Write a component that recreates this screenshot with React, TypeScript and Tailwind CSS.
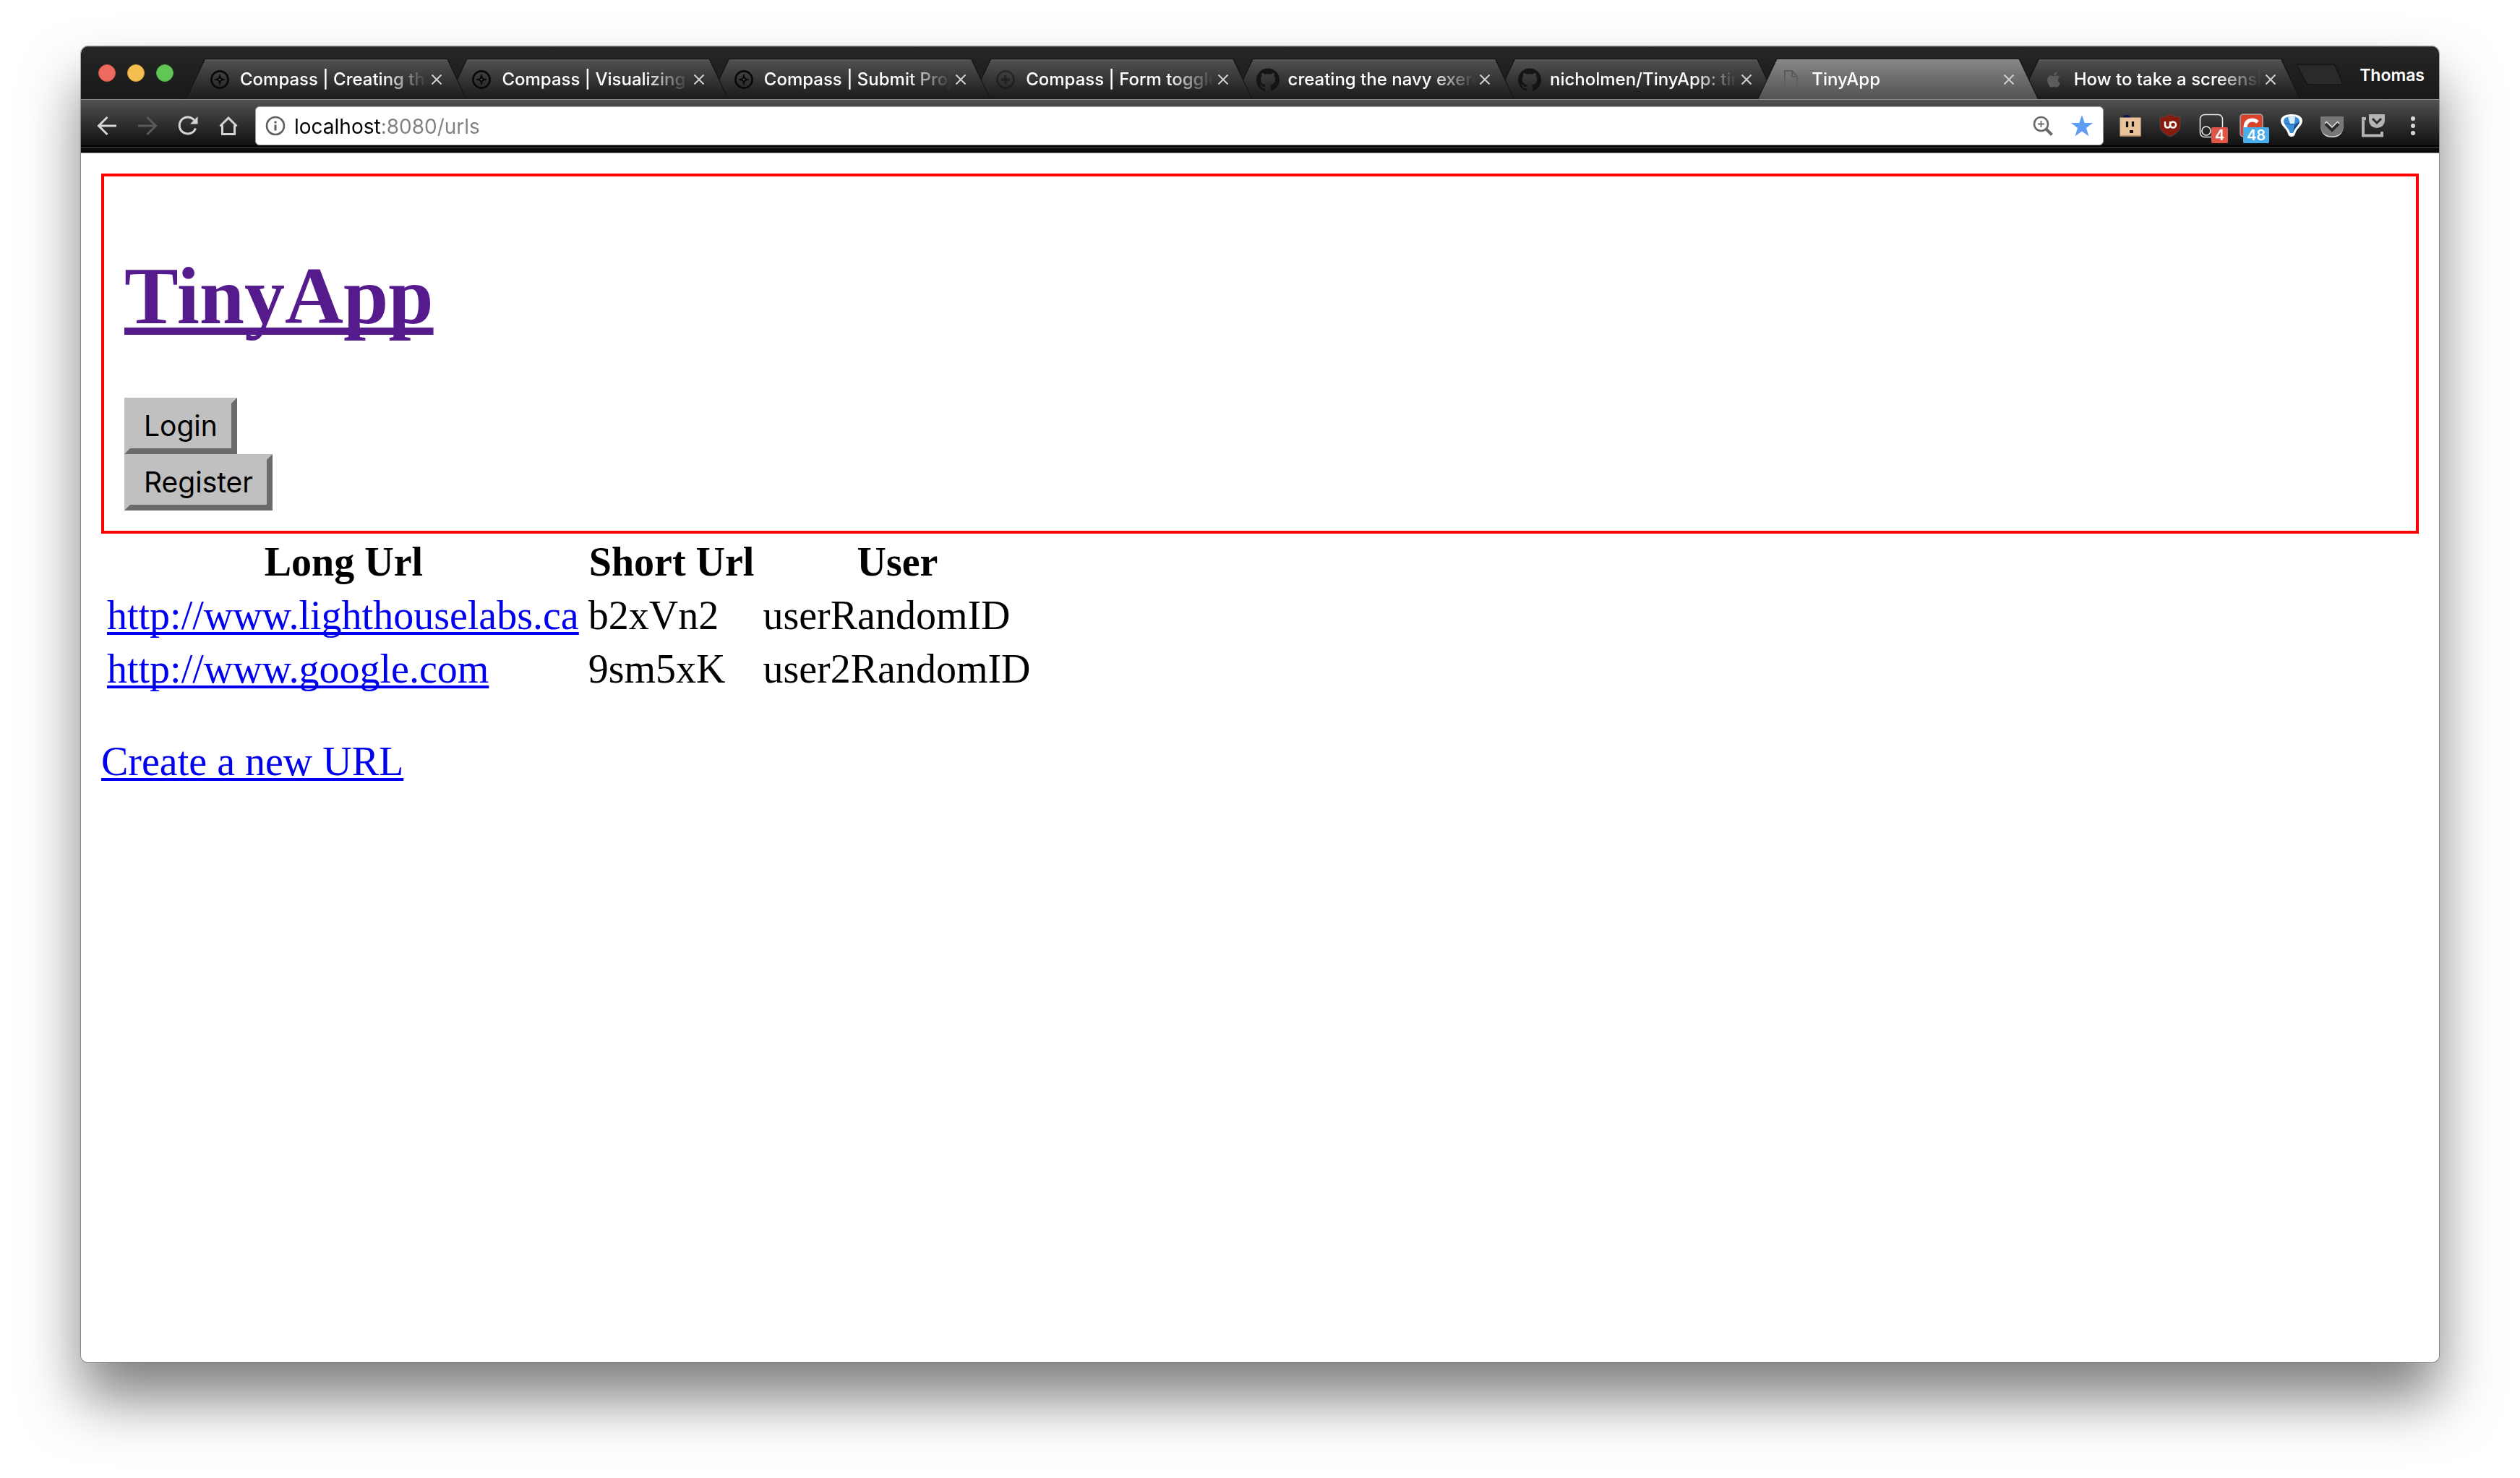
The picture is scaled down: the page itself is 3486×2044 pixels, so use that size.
import React from "react";
import { SiGithub } from "react-icons/si";
import { FaApple } from "react-icons/fa";

const CompassIcon = ({ faint = false }: { faint?: boolean }) => (
  <svg viewBox="0 0 26 26" className={faint ? "size-[26px] opacity-40" : "size-[26px]"} fill="none" stroke="#080808">
    <circle cx="13" cy="13" r="11.6" strokeWidth="2.6" />
    {faint ? (
      <path d="M13 7v12M7 13h12" strokeWidth="3.5" />
    ) : (
      <path d="M13 5.500l1.800 5.700 5.700 1.800-5.700 1.800L13 20.500l-1.800-5.700L5.500 13l5.700-1.800z" fill="#080808" strokeWidth="0.6" />
    )}
    {!faint && <circle cx="13" cy="13" r="1.300" fill="#555" stroke="none" />}
  </svg>
);

const PageIcon = () => (
  <svg viewBox="0 0 22 28" className="h-7 w-[22px]" fill="none" strokeWidth="2">
    <defs>
      <linearGradient id="page-fade" gradientUnits="userSpaceOnUse" x1="0" y1="0" x2="0" y2="28">
        <stop offset="0.300" stopColor="#5a5a5a" />
        <stop offset="1" stopColor="#5a5a5a" stopOpacity="0" />
      </linearGradient>
    </defs>
    <path d="M2 28V2h10l7 8v18M12 2v8h7" stroke="url(#page-fade)" />
  </svg>
);

type Tab = { title: string; icon: React.ReactNode; z: string; active?: boolean };

const tabs: Tab[] = [
  { title: "Compass | Creating the", icon: <CompassIcon />, z: "z-[8]" },
  { title: "Compass | Visualizing", icon: <CompassIcon />, z: "z-[7]" },
  { title: "Compass | Submit Project", icon: <CompassIcon />, z: "z-[6]" },
  { title: "Compass | Form toggle", icon: <CompassIcon faint />, z: "z-[5]" },
  { title: "creating the navy exercise", icon: <SiGithub className="size-8 text-[#141414]" />, z: "z-[4]" },
  { title: "nicholmen/TinyApp: tiny", icon: <SiGithub className="size-8 text-[#141414]" />, z: "z-[3]" },
  { title: "TinyApp", icon: <PageIcon />, z: "z-20", active: true },
  { title: "How to take a screenshot", icon: <FaApple className="size-6 text-[#5c5c5c]" />, z: "z-[1]" },
];

const Cross = () => (
  <svg viewBox="0 0 16 16" className="size-4" stroke="#d0d0d0" strokeWidth="2">
    <path d="M1.500 1.500l13 13M14.500 1.500l-13 13" />
  </svg>
);

function BrowserTab({ tab }: { tab: Tab }) {
  return (
    <div
      className={`relative -ml-[26px] h-full min-w-0 flex-1 bg-[#131313] pt-px [clip-path:polygon(26px_0,calc(100%-26px)_0,100%_100%,0_100%)] ${tab.z}`}
    >
      <div
        className={`flex h-full items-center pr-[33px] pl-[31px] [clip-path:polygon(27px_0,calc(100%-27px)_0,calc(100%-1px)_100%,1px_100%)] ${
          tab.active ? "bg-linear-to-b from-[#888888] to-[#525252]" : "bg-linear-to-b from-[#525252] to-[#1b1b1b]"
        }`}
      >
        <span className="flex w-8 shrink-0 items-center justify-center">{tab.icon}</span>
        <a
          href="#tab"
          className="ml-3 min-w-0 flex-1 overflow-hidden text-[24px] leading-[32px] font-medium whitespace-nowrap text-white mask-r-from-[76%] mask-r-to-100%"
        >
          {tab.title}
        </a>
        <button aria-label="Close tab" className="ml-[5px] shrink-0">
          <Cross />
        </button>
      </div>
    </div>
  );
}

function TabStrip() {
  return (
    <div className="flex h-[73px] bg-linear-to-b from-[#262626] to-[#191919] shadow-[inset_0_1px_0_#555]">
      <div className="flex w-[145px] shrink-0 items-center gap-4 pl-6">
        <button aria-label="Close window" className="size-6 rounded-full border border-[#d5544c] bg-[#ee6a5f]" />
        <button aria-label="Minimize window" className="size-6 rounded-full border border-[#dca23c] bg-[#f5bf4f]" />
        <button aria-label="Zoom window" className="size-6 rounded-full border border-[#4fb045] bg-[#62c655]" />
      </div>
      <nav aria-label="Tabs" className="flex min-w-0 flex-1 pt-[17px] pl-[26px]">
        {tabs.map((t) => (
          <BrowserTab key={t.title} tab={t} />
        ))}
      </nav>
      <button aria-label="New tab" className="-ml-[5px] self-center pt-1">
        <svg viewBox="0 0 66 32" className="h-8 w-[66px]">
          <path d="M3 2h47q3 0 4 3l9 22q1 3-2 3H17q-3 0-4-3L1 5Q0 2 3 2z" fill="#2a2a2a" stroke="#151515" strokeWidth="1.500" />
        </svg>
      </button>
      <button className="mt-5 mr-5 ml-[21px] self-start text-[23px] leading-[40px] font-semibold text-white">Thomas</button>
    </div>
  );
}

function AddressBar() {
  return (
    <div className="ml-[23px] flex h-[54px] min-w-0 flex-1 items-center rounded-md border border-[#9a9a9a] bg-white pr-[14px] pl-[13px]">
      <svg viewBox="0 0 28 28" className="size-7 shrink-0" fill="none" stroke="#5f5f5f">
        <circle cx="14" cy="14" r="12" strokeWidth="2.600" />
        <path d="M14 12.500v8M14 7.500v3" strokeWidth="3" />
      </svg>
      <input
        aria-label="Address"
        defaultValue="localhost:8080/urls"
        className="ml-3 h-[52px] min-w-0 flex-1 bg-linear-to-r from-black from-[119px] to-[#808080] to-[119px] bg-clip-text pt-[2px] text-[28px] leading-[50px] text-transparent outline-none"
      />
      <button aria-label="Zoom level">
        <svg viewBox="0 0 28 28" className="size-7" fill="none" stroke="#6a6a6a">
          <circle cx="11.500" cy="11.500" r="9.500" strokeWidth="2.600" />
          <path d="M18.500 18.500l8 8" strokeWidth="4" />
          <path d="M11.500 7v9M7 11.500h9" strokeWidth="1.800" />
        </svg>
      </button>
      <button aria-label="Bookmark" className="ml-[25px]">
        <svg viewBox="0 0 30 30" className="size-[30px]" fill="#5f9cf3">
          <path d="M15 0l3.700 11H30l-9 7 3.500 11.500L15 22.500 5.500 29.500 9 18 0 11h11.300z" />
        </svg>
      </button>
    </div>
  );
}

function Extensions() {
  return (
    <div className="flex shrink-0 items-center gap-5 pr-[18px] pl-[18px]">
      <button aria-label="Face">
        <svg viewBox="0 0 36 36" className="size-9">
          <path d="M8 7q1-4 6-4t6 4z" fill="#0b1350" />
          <rect x="4.500" y="6.500" width="29" height="26" fill="#eac39b" />
          <path d="M4.500 32h29" stroke="#a8805c" strokeWidth="1.500" />
          <path d="M14.500 12v8M22.500 12v7" stroke="#111" strokeWidth="3.200" />
          <path d="M18 24h5v4h-5z" fill="#111" />
        </svg>
      </button>
      <button aria-label="uBlock">
        <svg viewBox="0 0 36 36" className="size-9">
          <path d="M18 2q6 4 14 4v12q0 9-14 15Q4 27 4 18V6q8 0 14-4z" fill="#861b10" stroke="#5c4542" />
          <path d="M11 12v5q0 3.500 3.500 3.500T18 17v-5" fill="none" stroke="#fff" strokeWidth="2.500" />
          <circle cx="22" cy="16.500" r="4" fill="none" stroke="#fff" strokeWidth="2.500" />
        </svg>
      </button>
      <button aria-label="Blocked items" className="relative">
        <svg viewBox="0 0 36 36" className="size-9" fill="none" stroke="#e8e8e8" strokeWidth="1.600">
          <rect x="3.500" y="2.500" width="31" height="31" rx="6" />
          <circle cx="12" cy="25" r="6" />
        </svg>
        <span className="absolute top-5 left-[19px] rounded-xs bg-[#df5648] px-[5px] text-[20px] leading-[22px] font-semibold text-white">4</span>
      </button>
      <button aria-label="Requests" className="relative">
        <svg viewBox="0 0 36 36" className="size-9">
          <rect x="3" y="2" width="31" height="31" rx="4" fill="#d9432b" stroke="#a9a9a9" strokeWidth="1.500" />
          <path d="M10 21q0-11 10-11 4 0 7 3" fill="none" stroke="#fff" strokeWidth="5" />
        </svg>
        <span className="absolute top-5 left-[7px] rounded-xs bg-[#49aeeb] px-[5px] text-[20px] leading-[22px] font-semibold text-white">48</span>
      </button>
      <button aria-label="Balloon">
        <svg viewBox="0 0 36 36" className="size-9">
          <path d="M18 2C8 2 3 6 3 11c0 7 8 10 10 18q1 4 5 4t5-4c2-8 10-11 10-18C33 6 28 2 18 2z" fill="#fff" />
          <path d="M18 5C10 5 7 8 7 12c0 4 7 9 9 16h4c2-7 9-12 9-16 0-4-3-7-11-7z" fill="#3a8fd9" />
          <path d="M20 28l2-11 7-5c0 4-7 9-9 16z" fill="#174a80" />
          <path d="M13 6q5-2 10 0l-1 9h-6z" fill="#d8ecfb" />
          <path d="M9 14q9 4 18 0" fill="none" stroke="#1c5fa8" strokeWidth="1" />
        </svg>
      </button>
      <button aria-label="Pocket">
        <svg viewBox="0 0 36 36" className="size-9">
          <path d="M2 18q1 16 16 16t16-16z" fill="#e4e4e4" />
          <path d="M2 6q0-1 1-1h30q1 0 1 1v11q0 15-16 15.500Q2 32 2 17z" fill="#777" />
          <path d="M9 13l9 9 9-9" fill="none" stroke="#eee" strokeWidth="4" />
          <path d="M9 15l9 9 9-9" fill="none" stroke="#2a2a2a" strokeWidth="4" />
        </svg>
      </button>
      <button aria-label="Save to Pocket">
        <svg viewBox="0 0 36 36" className="size-9">
          <path d="M9 8H5v23.500h26V26" fill="none" stroke="#b4b4b4" strokeWidth="4" />
          <path d="M13 2h22v8q0 10-11 11-11-1-11-11z" fill="#b4b4b4" />
          <path d="M18 8l6 6 6-6" fill="none" stroke="#2c2c2c" strokeWidth="3" />
        </svg>
      </button>
      <button aria-label="Menu">
        <svg viewBox="0 0 36 36" className="size-9" fill="#d9d9d9">
          <circle cx="18" cy="8" r="3" />
          <circle cx="18" cy="18" r="3" />
          <circle cx="18" cy="28" r="3" />
        </svg>
      </button>
    </div>
  );
}

function Toolbar() {
  return (
    <div className="border-b border-[#8a8a8a] bg-[#0a0a0a] pb-[6px]">
      <div className="flex h-[66px] items-center border-t border-b-2 border-t-[#8c8c8c] border-b-black bg-linear-to-b from-[#525252] to-[#121212] pt-[9px]">
        <div className="flex shrink-0 items-center gap-7 pl-[22px]">
          <button aria-label="Back">
            <svg viewBox="0 0 28 28" className="size-7" fill="none" stroke="#d6d6d6" strokeWidth="3">
              <path d="M27 14H3M14.500 2L2.500 14l12 12" />
            </svg>
          </button>
          <button aria-label="Forward">
            <svg viewBox="0 0 28 28" className="size-7" fill="none" stroke="#5a5a5a" strokeWidth="3">
              <path d="M1 14h24M13.500 2l12 12-12 12" />
            </svg>
          </button>
          <button aria-label="Reload">
            <svg viewBox="0 0 28 28" className="size-7" fill="none" stroke="#d6d6d6" strokeWidth="3">
              <path d="M24.500 17.500A11.500 11.500 0 1 1 22.500 6" />
              <path d="M27.500 1v10.500H17z" fill="#d6d6d6" stroke="none" />
            </svg>
          </button>
          <button aria-label="Home">
            <svg viewBox="0 0 28 28" className="size-7" fill="none" stroke="#d6d6d6" strokeWidth="3">
              <path d="M2.500 14.500L14 3l11.500 11.500M5.500 13v12.500h17V13" />
            </svg>
          </button>
        </div>
        <AddressBar />
        <Extensions />
      </div>
      <div className="h-[2px] bg-[#2b2b2b]" />
    </div>
  );
}

const urls = [
  { long: "http://www.lighthouselabs.ca", short: "b2xVn2", user: "userRandomID" },
  { long: "http://www.google.com", short: "9sm5xK", user: "user2RandomID" },
];

const headCell = "py-[3px] pr-1 pl-[5px]";
const cell = "py-[3px] pr-[5px] pl-1";
const link = "text-[#0000ee] underline decoration-4 underline-offset-4 [text-decoration-skip-ink:none]";
const formButton =
  "block border-8 border-t-[#c0c0c0] border-r-[#6b6b6b] border-b-[#6b6b6b] border-l-[#c0c0c0] bg-[#c0c0c0] py-2 pr-[19px] pl-[19px] font-['Inter',sans-serif] text-[39px] leading-[46px] text-black";

export default function App() {
  return (
    <div className="flex min-h-screen flex-col bg-white px-28 pt-16 pb-40 font-['Inter',sans-serif]">
      <div className="flex flex-1 flex-col rounded-[10px] shadow-[0_0_0_1px_rgba(0,0,0,0.3),0_50px_80px_rgba(0,0,0,0.5)]">
        <div className="flex flex-1 flex-col overflow-hidden rounded-[10px] bg-white">
          <TabStrip />
          <Toolbar />
          <main className="p-7 font-['Liberation_Serif',serif] text-[56px] leading-[64px] text-black">
            <header className="border-4 border-[#ff0000] p-7">
              <h1 className="mt-[73px] mb-[77px] text-[112px] leading-[128px] font-bold">
                <a href="#home" className="text-[#551a8b] underline decoration-[10px] underline-offset-[6px] [text-decoration-skip-ink:none]">
                  TinyApp
                </a>
              </h1>
              <button className={formButton}>Login</button>
              <button className={formButton}>Register</button>
            </header>
            <table className="border-separate border-spacing-1">
              <thead>
                <tr>
                  <th className={headCell}>Long Url</th>
                  <th className={headCell}>Short Url</th>
                  <th className={headCell}>User</th>
                </tr>
              </thead>
              <tbody>
                {urls.map((u) => (
                  <tr key={u.short}>
                    <td className={cell}><a href={u.long} className={link}>{u.long}</a></td>
                    <td className={cell}>{u.short}</td>
                    <td className={cell}>{u.user}</td>
                  </tr>
                ))}
              </tbody>
            </table>
            <p className="mt-[57px]">
              <a href="#new" className={link}>Create a new URL</a>
            </p>
          </main>
        </div>
      </div>
    </div>
  );
}
